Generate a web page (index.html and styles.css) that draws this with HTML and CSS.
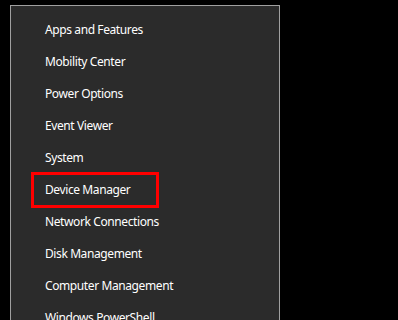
FILE: index.html
```html
<!DOCTYPE html>
<html>
<head>
    <title>Quick Link Menu</title>
    <link rel="stylesheet" href="styles.css">
</head>
<body>
    <ul class="menu">
        <li>Apps and Features</li>
        <li>Mobility Center</li>
        <li>Power Options</li>
        <li>Event Viewer</li>
        <li>System</li>
        <li class="marked">Device Manager</li>
        <li>Network Connections</li>
        <li>Disk Management</li>
        <li>Computer Management</li>
        <li>Windows PowerShell</li>
    </ul>
</body>
</html>
```

FILE: styles.css
```css
body { margin: 0; background: #000; font-family: "Noto Sans", "Open Sans", sans-serif; }
.menu { list-style: none; margin: 5px 0 0 10px; padding: 8px 0; width: 268px; background: #2b2b2b; border: 1px solid #a0a0a0; }
.menu li { position: relative; height: 32px; line-height: 32px; padding-left: 34px; color: #fff; font-size: 12px; letter-spacing: -0.4px; }
.marked::after { content: ""; position: absolute; left: 20px; top: -2px; width: 128px; height: 36px; box-sizing: border-box; border: 3px solid #f00; }
```
